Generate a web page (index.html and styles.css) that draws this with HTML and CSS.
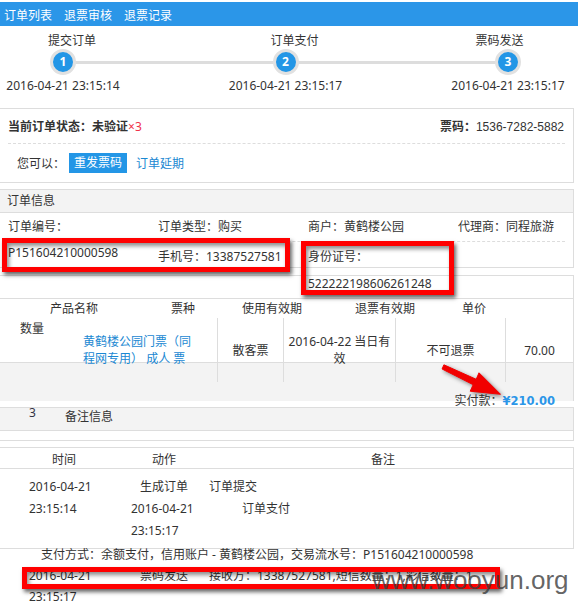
FILE: index.html
```html
<!DOCTYPE html>
<html lang="zh-CN">
<head>
<meta charset="utf-8">
<title>订单详情</title>
<link rel="stylesheet" href="styles.css">
</head>
<body>
<div class="page">
  <nav class="topbar"><span>订单列表</span><span>退票审核</span><span>退票记录</span></nav>

  <div class="steps">
    <div class="step">
      <div class="step-label shift-r">提交订单</div>
      <div class="step-dot">1</div>
      <div class="step-time">2016-04-21 23:15:14</div>
    </div>
    <div class="step">
      <div class="step-label shift-r">订单支付</div>
      <div class="step-dot">2</div>
      <div class="step-time">2016-04-21 23:15:17</div>
    </div>
    <div class="step">
      <div class="step-label shift-l">票码发送</div>
      <div class="step-dot">3</div>
      <div class="step-time">2016-04-21 23:15:17</div>
    </div>
  </div>

  <section class="panel status">
    <div class="status-row">
      <div class="status-left"><b>当前订单状态：</b><b>未验证</b><span class="red">×3</span></div>
      <div class="status-right"><b>票码：</b><span class="code">1536-7282-5882</span></div>
    </div>
    <div class="action-row">
      <span>您可以：</span>
      <a class="btn">重发票码</a>
      <a class="link">订单延期</a>
    </div>
  </section>

  <section class="panel info">
    <div class="panel-head">订单信息</div>
    <div class="info-row first">
      <span>订单编号：</span>
      <span>订单类型：购买</span>
      <span>商户：黄鹤楼公园</span>
      <span>代理商：同程旅游</span>
    </div>
    <div class="info-row second">
      <span class="v-no">P151604210000598</span>
      <span class="v-phone">手机号：13387527581</span>
      <div class="v-id"><div>身份证号：</div><div class="id-num">522222198606261248</div></div>
    </div>
  </section>

  <section class="panel product">
    <div class="blank"></div>
    <div class="thead">
      <span>产品名称</span><span>票种</span><span>使用有效期</span><span>退票有效期</span><span>单价</span>
    </div>
    <div class="pbody">
      <div class="prow">
        <div class="pcell first">
          <span class="qty">数量</span>
          <a class="link pname">黄鹤楼公园门票（同程网专用） 成人 票</a>
        </div>
        <div class="pcell">散客票</div>
        <div class="pcell">2016-04-22 当日有效</div>
        <div class="pcell">不可退票</div>
        <div class="pcell">70.00</div>
      </div>
      <div class="total"><div class="total-text">实付款：<b class="amount">¥210.00</b></div></div>
    </div>
  </section>

  <section class="panel remark">
    <div class="panel-head remark-head"><span class="num">3</span><span class="remark-title">备注信息</span></div>
    <div class="remark-body"></div>
  </section>

  <section class="panel log">
    <div class="log-head"><span>时间</span><span>动作</span><span>备注</span></div>
    <div class="lgrid log-body">
      <span class="c2 r1">2016-04-21</span>
      <span class="c4 r1">生成订单</span>
      <span class="c5 r1">订单提交</span>
      <span class="c2 r2">23:15:14</span>
      <span class="c3 r2">2016-04-21</span>
      <span class="c6 r2">订单支付</span>
      <span class="c3 r3">23:15:17</span>
    </div>
  </section>

  <div class="pay">支付方式：余额支付，信用账户 - 黄鹤楼公园，交易流水号：P151604210000598</div>
  <div class="lgrid log-extra">
    <span class="c2 r1">2016-04-21</span>
    <span class="c4 r1">票码发送</span>
    <span class="c5 r1">接收方：13387527581,短信数量：1,彩信数量：1</span>
    <span class="c2 r2">23:15:17</span>
  </div>

  <div class="mark mark-a"></div>
  <div class="mark mark-b"></div>
  <div class="mark mark-c"></div>
  <svg class="arrow" viewBox="435 355 75 45" width="75" height="45" aria-hidden="true">
    <polygon points="443.9,362.8 476.2,377.3 479,370.8 500.5,392.3 470.2,389.2 473.2,382.7 442.1,367" fill="#f10000" stroke="#f10000" stroke-width="1" stroke-linejoin="round"/>
  </svg>
  <div class="watermark">www.wooyun.org</div>
</div>
</body>
</html>
```

FILE: styles.css
```css
html, body {
  margin: 0;
  padding: 0;
  overflow: hidden;
  background: #fff;
}
body {
  font-family: "Noto Sans", "Noto Sans CJK SC", sans-serif;
  font-size: 12px;
  color: #333;
}
.page {
  position: relative;
  width: 578px;
  height: 607px;
}
a { text-decoration: none; }
.link { color: #1a88d2; }

/* top bar */
.topbar {
  margin-top: 2px;
  height: 24px;
  line-height: 27px;
  background: #2b96e8;
  color: #fff;
  display: flex;
  gap: 12px;
  padding-left: 4px;
  overflow: hidden;
}

/* steps */
.steps {
  position: relative;
  height: 82px;
  display: flex;
  justify-content: space-between;
  padding-right: 7px;
}
.steps::before {
  content: "";
  position: absolute;
  left: 63px;
  top: 35px;
  width: 445px;
  height: 3px;
  background: #dddddd;
}
.step {
  position: relative;
  width: 126px;
  display: flex;
  flex-direction: column;
  align-items: center;
  padding-top: 7px;
}
.step-label {
  line-height: 15px;
  white-space: nowrap;
}
.shift-r { padding-left: 18px; }
.shift-l { padding-right: 17px; }
.step-dot {
  margin-top: 1px;
  width: 20px;
  height: 20px;
  border: 3px solid #e1e1e1;
  border-radius: 50%;
  background: #2396e6;
  color: #fff;
  font-weight: bold;
  text-align: center;
  line-height: 20px;
  font-size: 12px;
}
.step-time {
  margin-top: 3px;
  line-height: 16px;
  white-space: nowrap;
}

/* panels */
.panel {
  box-sizing: border-box;
  width: 574px;
  border: 1px solid #dddddd;
  border-left: none;
}
.panel-head {
  height: 22px;
  line-height: 22px;
  background: #f3f3f3;
  border-bottom: 1px solid #dddddd;
  padding-left: 7px;
}

/* status */
.status-row {
  margin: 0 8px;
  height: 34px;
  border-bottom: 1px dashed #dddddd;
  display: flex;
  justify-content: space-between;
  align-items: center;
  padding-right: 1px;
}
.red { color: #f0304a; }
.code { font-family: "Liberation Sans", "Noto Sans CJK SC", sans-serif; }
.action-row {
  height: 38px;
  display: flex;
  align-items: center;
  padding-left: 17px;
}
.btn {
  margin-left: 4px;
  height: 20px;
  line-height: 20px;
  padding: 0 5px;
  background: #2396e6;
  color: #fff;
}
.action-row .link { margin-left: 9px; }

/* order info */
.info { margin-top: 6px; }
.info-row {
  margin: 0 8px;
  display: grid;
  grid-template-columns: 150px 150px 150px 1fr;
  white-space: nowrap;
}
.info-row.first {
  height: 28px;
  line-height: 28px;
  border-bottom: 1px dashed #dddddd;
}
.info-row.second {
  height: 25px;
  line-height: 22px;
}
.v-phone, .v-id { padding-top: 4px; }
.id-num { margin-top: 5px; }

/* product */
.product {
  margin-top: 7px;
  border-bottom: none;
}
.blank {
  height: 22px;
  border-bottom: 1px solid #dddddd;
}
.thead {
  height: 19px;
  line-height: 19px;
  display: grid;
  grid-template-columns: 148px 70px 108px 118px 60px;
  text-align: center;
  white-space: nowrap;
}
.pbody {
  height: 83px;
  background: linear-gradient(to bottom, #fff 0, #fff 44px, #dddddd 44px, #dddddd 45px, #f3f3f3 45px);
}
.prow {
  height: 64px;
  display: grid;
  grid-template-columns: 217px 66px 112px 110px 1fr;
}
.pcell {
  border-left: 1px solid #dddddd;
  display: flex;
  align-items: center;
  justify-content: center;
  text-align: center;
  line-height: 17px;
  padding: 0 4px;
}
.pcell.first {
  border-left: none;
  justify-content: flex-start;
  text-align: left;
  padding: 0;
}
.qty {
  align-self: flex-start;
  margin-top: 2px;
  padding-left: 20px;
  line-height: 17px;
}
.pname {
  margin-left: 39px;
  width: 110px;
  line-height: 17px;
}
.total {
  height: 19px;
  display: flex;
  justify-content: flex-end;
  padding-right: 18px;
}
.total-text {
  margin-top: 9px;
  line-height: 19px;
  white-space: nowrap;
}
.amount {
  color: #2b96e8;
  font-family: "DejaVu Sans", sans-serif;
  font-size: 11.5px;
}

/* remark */
.remark { margin-top: 6px; }
.remark-head {
  display: flex;
  padding-left: 29px;
}
.num {
  line-height: 8px;
  color: #334;
  align-self: flex-start;
  margin-top: 1px;
}
.remark-title {
  margin-left: 29px;
  line-height: 22px;
  margin-top: -2px;
}
.remark-body { height: 9px; }

/* log */
.log { margin-top: 6px; }
.log-head {
  height: 21px;
  box-sizing: border-box;
  padding-top: 2px;
  line-height: 19px;
  border-bottom: 1px solid #dddddd;
  display: grid;
  grid-template-columns: 128px 72px 366px;
  text-align: center;
}
.lgrid {
  display: grid;
  grid-template-columns: 29px 102px 9px 69px 33px 1fr;
  white-space: nowrap;
}
.log-body {
  height: 79px;
  box-sizing: border-box;
  padding-top: 7px;
  grid-template-rows: 22px 22px 22px;
  line-height: 22px;
}
.c2 { grid-column: 2; }
.c3 { grid-column: 3; }
.c4 { grid-column: 4; }
.c5 { grid-column: 5; }
.c6 { grid-column: 6; }
.r1 { grid-row: 1; }
.r2 { grid-row: 2; }
.r3 { grid-row: 3; }
.pay {
  padding-left: 41px;
  line-height: 12px;
  margin-top: 0;
  margin-bottom: 4px;
  white-space: nowrap;
}
.log-extra {
  grid-template-rows: 21px 21px;
  line-height: 21px;
}

/* annotations */
.mark {
  position: absolute;
  box-sizing: border-box;
  border: 5px solid #ff0000;
  box-shadow: 2px 3px 4px rgba(0, 0, 0, 0.6), inset 2px 3px 4px rgba(0, 0, 0, 0.45);
}
.mark-a { left: 2px; top: 236px; width: 288px; height: 34px; }
.mark-b { left: 301px; top: 239px; width: 153px; height: 54px; }
.mark-c { left: 22px; top: 565px; width: 478px; height: 22px; }
.arrow {
  position: absolute;
  left: 435px;
  top: 355px;
  filter: drop-shadow(2px 2px 2px rgba(0, 0, 0, 0.45));
}
.watermark {
  position: absolute;
  left: 372px;
  top: 565px;
  font-family: "Liberation Sans", sans-serif;
  font-size: 26px;
  line-height: 26px;
  color: rgba(60, 60, 60, 0.8);
  white-space: nowrap;
}
```
